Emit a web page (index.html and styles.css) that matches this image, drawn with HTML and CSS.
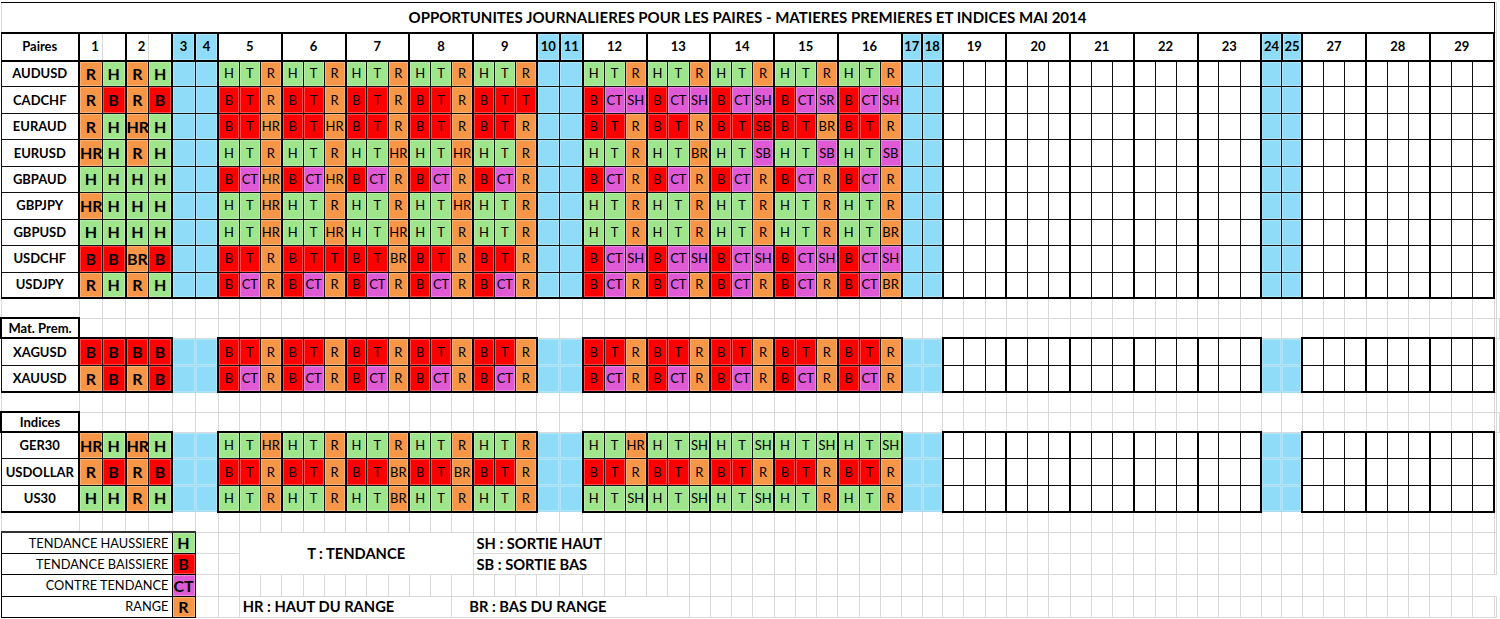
FILE: index.html
```html
<!DOCTYPE html>
<html lang="fr">
<head>
<meta charset="utf-8">
<title>Opportunités journalières mai 2014</title>
<link rel="stylesheet" href="styles.css">
</head>
<body>
<table class="sheet">
<colgroup>
<col class="c-lbl">
<col class="c-a"><col class="c-a"><col class="c-a"><col class="c-a">
<col class="c-w"><col class="c-w">
<col class="c-d"><col class="c-d"><col class="c-d"><col class="c-d"><col class="c-d"><col class="c-d"><col class="c-d"><col class="c-d"><col class="c-d"><col class="c-d"><col class="c-d"><col class="c-d"><col class="c-d"><col class="c-d"><col class="c-d">
<col class="c-w"><col class="c-w">
<col class="c-d"><col class="c-d"><col class="c-d"><col class="c-d"><col class="c-d"><col class="c-d"><col class="c-d"><col class="c-d"><col class="c-d"><col class="c-d"><col class="c-d"><col class="c-d"><col class="c-d"><col class="c-d"><col class="c-d">
<col class="c-e"><col class="c-e">
<col class="c-d"><col class="c-d"><col class="c-d"><col class="c-d"><col class="c-d"><col class="c-d"><col class="c-d"><col class="c-d"><col class="c-d"><col class="c-d"><col class="c-d"><col class="c-d"><col class="c-d"><col class="c-d"><col class="c-d">
<col class="c-e"><col class="c-e">
<col class="c-d"><col class="c-d"><col class="c-d"><col class="c-d"><col class="c-d"><col class="c-d"><col class="c-d"><col class="c-d"><col class="c-d">
<col class="c-x">
</colgroup>
<tbody>
<tr class="ti"><td colspan="67" class="tt">OPPORTUNITES JOURNALIERES POUR LES PAIRES - MATIERES PREMIERES ET INDICES MAI 2014</td><td class="x"></td></tr>

<tr class="d hd t u"><td class="l">Paires</td><td class="hn">1</td><td class="e"></td><td class="hn">2</td><td class="e"></td><td class="b e">3</td><td class="b e">4</td><td colspan="3" class="e">5</td><td colspan="3" class="e">6</td><td colspan="3" class="e">7</td><td colspan="3" class="e">8</td><td colspan="3" class="e">9</td><td class="b e">10</td><td class="b e">11</td><td colspan="3" class="e">12</td><td colspan="3" class="e">13</td><td colspan="3" class="e">14</td><td colspan="3" class="e">15</td><td colspan="3" class="e">16</td><td class="b e">17</td><td class="b e">18</td><td colspan="3" class="e">19</td><td colspan="3" class="e">20</td><td colspan="3" class="e">21</td><td colspan="3" class="e">22</td><td colspan="3" class="e">23</td><td class="b e">24</td><td class="b e">25</td><td colspan="3" class="e">27</td><td colspan="3" class="e">28</td><td colspan="3" class="e">29</td><td class="x"></td></tr>

<tr class="d p"><td class="l">AUDUSD</td><td class="o big">R</td><td class="g big e">H</td><td class="o big">R</td><td class="g big e">H</td><td class="b"></td><td class="b e"></td><td class="g">H</td><td class="g">T</td><td class="o e">R</td><td class="g">H</td><td class="g">T</td><td class="o e">R</td><td class="g">H</td><td class="g">T</td><td class="o e">R</td><td class="g">H</td><td class="g">T</td><td class="o e">R</td><td class="g">H</td><td class="g">T</td><td class="o e">R</td><td class="b"></td><td class="b e"></td><td class="g">H</td><td class="g">T</td><td class="o e">R</td><td class="g">H</td><td class="g">T</td><td class="o e">R</td><td class="g">H</td><td class="g">T</td><td class="o e">R</td><td class="g">H</td><td class="g">T</td><td class="o e">R</td><td class="g">H</td><td class="g">T</td><td class="o e">R</td><td class="b"></td><td class="b e"></td><td></td><td></td><td class="e"></td><td></td><td></td><td class="e"></td><td></td><td></td><td class="e"></td><td></td><td></td><td class="e"></td><td></td><td></td><td class="e"></td><td class="b"></td><td class="b e"></td><td></td><td></td><td class="e"></td><td></td><td></td><td class="e"></td><td></td><td></td><td class="e"></td><td class="x"></td></tr>

<tr class="d p"><td class="l">CADCHF</td><td class="o big">R</td><td class="r big e">B</td><td class="o big">R</td><td class="r big e">B</td><td class="b"></td><td class="b e"></td><td class="r">B</td><td class="r">T</td><td class="o e">R</td><td class="r">B</td><td class="r">T</td><td class="o e">R</td><td class="r">B</td><td class="r">T</td><td class="o e">R</td><td class="r">B</td><td class="r">T</td><td class="o e">R</td><td class="r">B</td><td class="r">T</td><td class="r e">T</td><td class="b"></td><td class="b e"></td><td class="r">B</td><td class="m">CT</td><td class="m e">SH</td><td class="r">B</td><td class="m">CT</td><td class="m e">SH</td><td class="r">B</td><td class="m">CT</td><td class="m e">SH</td><td class="r">B</td><td class="m">CT</td><td class="m e">SR</td><td class="r">B</td><td class="m">CT</td><td class="m e">SH</td><td class="b"></td><td class="b e"></td><td></td><td></td><td class="e"></td><td></td><td></td><td class="e"></td><td></td><td></td><td class="e"></td><td></td><td></td><td class="e"></td><td></td><td></td><td class="e"></td><td class="b"></td><td class="b e"></td><td></td><td></td><td class="e"></td><td></td><td></td><td class="e"></td><td></td><td></td><td class="e"></td><td class="x"></td></tr>

<tr class="d p"><td class="l">EURAUD</td><td class="o big">R</td><td class="g big e">H</td><td class="o big">HR</td><td class="g big e">H</td><td class="b"></td><td class="b e"></td><td class="r">B</td><td class="r">T</td><td class="o e">HR</td><td class="r">B</td><td class="r">T</td><td class="o e">HR</td><td class="r">B</td><td class="r">T</td><td class="o e">R</td><td class="r">B</td><td class="r">T</td><td class="o e">R</td><td class="r">B</td><td class="r">T</td><td class="o e">R</td><td class="b"></td><td class="b e"></td><td class="r">B</td><td class="r">T</td><td class="o e">R</td><td class="r">B</td><td class="r">T</td><td class="o e">R</td><td class="r">B</td><td class="r">T</td><td class="r e">SB</td><td class="r">B</td><td class="r">T</td><td class="o e">BR</td><td class="r">B</td><td class="r">T</td><td class="o e">R</td><td class="b"></td><td class="b e"></td><td></td><td></td><td class="e"></td><td></td><td></td><td class="e"></td><td></td><td></td><td class="e"></td><td></td><td></td><td class="e"></td><td></td><td></td><td class="e"></td><td class="b"></td><td class="b e"></td><td></td><td></td><td class="e"></td><td></td><td></td><td class="e"></td><td></td><td></td><td class="e"></td><td class="x"></td></tr>

<tr class="d p"><td class="l">EURUSD</td><td class="o big">HR</td><td class="g big e">H</td><td class="o big">R</td><td class="g big e">H</td><td class="b"></td><td class="b e"></td><td class="g">H</td><td class="g">T</td><td class="o e">R</td><td class="g">H</td><td class="g">T</td><td class="o e">R</td><td class="g">H</td><td class="g">T</td><td class="o e">HR</td><td class="g">H</td><td class="g">T</td><td class="o e">HR</td><td class="g">H</td><td class="g">T</td><td class="o e">R</td><td class="b"></td><td class="b e"></td><td class="g">H</td><td class="g">T</td><td class="o e">R</td><td class="g">H</td><td class="g">T</td><td class="o e">BR</td><td class="g">H</td><td class="g">T</td><td class="m e">SB</td><td class="g">H</td><td class="g">T</td><td class="m e">SB</td><td class="g">H</td><td class="g">T</td><td class="m e">SB</td><td class="b"></td><td class="b e"></td><td></td><td></td><td class="e"></td><td></td><td></td><td class="e"></td><td></td><td></td><td class="e"></td><td></td><td></td><td class="e"></td><td></td><td></td><td class="e"></td><td class="b"></td><td class="b e"></td><td></td><td></td><td class="e"></td><td></td><td></td><td class="e"></td><td></td><td></td><td class="e"></td><td class="x"></td></tr>

<tr class="d p"><td class="l">GBPAUD</td><td class="g big">H</td><td class="g big e">H</td><td class="g big">H</td><td class="g big e">H</td><td class="b"></td><td class="b e"></td><td class="r">B</td><td class="m">CT</td><td class="o e">HR</td><td class="r">B</td><td class="m">CT</td><td class="o e">HR</td><td class="r">B</td><td class="m">CT</td><td class="o e">R</td><td class="r">B</td><td class="m">CT</td><td class="o e">R</td><td class="r">B</td><td class="m">CT</td><td class="o e">R</td><td class="b"></td><td class="b e"></td><td class="r">B</td><td class="m">CT</td><td class="o e">R</td><td class="r">B</td><td class="m">CT</td><td class="o e">R</td><td class="r">B</td><td class="m">CT</td><td class="o e">R</td><td class="r">B</td><td class="m">CT</td><td class="o e">R</td><td class="r">B</td><td class="m">CT</td><td class="o e">R</td><td class="b"></td><td class="b e"></td><td></td><td></td><td class="e"></td><td></td><td></td><td class="e"></td><td></td><td></td><td class="e"></td><td></td><td></td><td class="e"></td><td></td><td></td><td class="e"></td><td class="b"></td><td class="b e"></td><td></td><td></td><td class="e"></td><td></td><td></td><td class="e"></td><td></td><td></td><td class="e"></td><td class="x"></td></tr>

<tr class="d p"><td class="l">GBPJPY</td><td class="o big">HR</td><td class="g big e">H</td><td class="g big">H</td><td class="g big e">H</td><td class="b"></td><td class="b e"></td><td class="g">H</td><td class="g">T</td><td class="o e">HR</td><td class="g">H</td><td class="g">T</td><td class="o e">R</td><td class="g">H</td><td class="g">T</td><td class="o e">R</td><td class="g">H</td><td class="g">T</td><td class="o e">HR</td><td class="g">H</td><td class="g">T</td><td class="o e">R</td><td class="b"></td><td class="b e"></td><td class="g">H</td><td class="g">T</td><td class="o e">R</td><td class="g">H</td><td class="g">T</td><td class="o e">R</td><td class="g">H</td><td class="g">T</td><td class="o e">R</td><td class="g">H</td><td class="g">T</td><td class="o e">R</td><td class="g">H</td><td class="g">T</td><td class="o e">R</td><td class="b"></td><td class="b e"></td><td></td><td></td><td class="e"></td><td></td><td></td><td class="e"></td><td></td><td></td><td class="e"></td><td></td><td></td><td class="e"></td><td></td><td></td><td class="e"></td><td class="b"></td><td class="b e"></td><td></td><td></td><td class="e"></td><td></td><td></td><td class="e"></td><td></td><td></td><td class="e"></td><td class="x"></td></tr>

<tr class="d p"><td class="l">GBPUSD</td><td class="g big">H</td><td class="g big e">H</td><td class="g big">H</td><td class="g big e">H</td><td class="b"></td><td class="b e"></td><td class="g">H</td><td class="g">T</td><td class="o e">HR</td><td class="g">H</td><td class="g">T</td><td class="o e">HR</td><td class="g">H</td><td class="g">T</td><td class="o e">HR</td><td class="g">H</td><td class="g">T</td><td class="o e">R</td><td class="g">H</td><td class="g">T</td><td class="o e">R</td><td class="b"></td><td class="b e"></td><td class="g">H</td><td class="g">T</td><td class="o e">R</td><td class="g">H</td><td class="g">T</td><td class="o e">R</td><td class="g">H</td><td class="g">T</td><td class="o e">R</td><td class="g">H</td><td class="g">T</td><td class="o e">R</td><td class="g">H</td><td class="g">T</td><td class="o e">BR</td><td class="b"></td><td class="b e"></td><td></td><td></td><td class="e"></td><td></td><td></td><td class="e"></td><td></td><td></td><td class="e"></td><td></td><td></td><td class="e"></td><td></td><td></td><td class="e"></td><td class="b"></td><td class="b e"></td><td></td><td></td><td class="e"></td><td></td><td></td><td class="e"></td><td></td><td></td><td class="e"></td><td class="x"></td></tr>

<tr class="d p"><td class="l">USDCHF</td><td class="r big">B</td><td class="r big e">B</td><td class="o big">BR</td><td class="r big e">B</td><td class="b"></td><td class="b e"></td><td class="r">B</td><td class="r">T</td><td class="o e">R</td><td class="r">B</td><td class="r">T</td><td class="r e">T</td><td class="r">B</td><td class="r">T</td><td class="o e">BR</td><td class="r">B</td><td class="r">T</td><td class="o e">R</td><td class="r">B</td><td class="r">T</td><td class="o e">R</td><td class="b"></td><td class="b e"></td><td class="r">B</td><td class="m">CT</td><td class="m e">SH</td><td class="r">B</td><td class="m">CT</td><td class="m e">SH</td><td class="r">B</td><td class="m">CT</td><td class="m e">SH</td><td class="r">B</td><td class="m">CT</td><td class="m e">SH</td><td class="r">B</td><td class="m">CT</td><td class="m e">SH</td><td class="b"></td><td class="b e"></td><td></td><td></td><td class="e"></td><td></td><td></td><td class="e"></td><td></td><td></td><td class="e"></td><td></td><td></td><td class="e"></td><td></td><td></td><td class="e"></td><td class="b"></td><td class="b e"></td><td></td><td></td><td class="e"></td><td></td><td></td><td class="e"></td><td></td><td></td><td class="e"></td><td class="x"></td></tr>

<tr class="d p u"><td class="l">USDJPY</td><td class="o big">R</td><td class="g big e">H</td><td class="o big">R</td><td class="g big e">H</td><td class="b"></td><td class="b e"></td><td class="r">B</td><td class="m">CT</td><td class="o e">R</td><td class="r">B</td><td class="m">CT</td><td class="o e">R</td><td class="r">B</td><td class="m">CT</td><td class="o e">R</td><td class="r">B</td><td class="m">CT</td><td class="o e">R</td><td class="r">B</td><td class="m">CT</td><td class="o e">R</td><td class="b"></td><td class="b e"></td><td class="r">B</td><td class="m">CT</td><td class="o e">R</td><td class="r">B</td><td class="m">CT</td><td class="o e">R</td><td class="r">B</td><td class="m">CT</td><td class="o e">R</td><td class="r">B</td><td class="m">CT</td><td class="o e">R</td><td class="r">B</td><td class="m">CT</td><td class="o e">BR</td><td class="b"></td><td class="b e"></td><td></td><td></td><td class="e"></td><td></td><td></td><td class="e"></td><td></td><td></td><td class="e"></td><td></td><td></td><td class="e"></td><td></td><td></td><td class="e"></td><td class="b"></td><td class="b e"></td><td></td><td></td><td class="e"></td><td></td><td></td><td class="e"></td><td></td><td></td><td class="e"></td><td class="x"></td></tr>

<tr class="s"><td></td><td></td><td></td><td></td><td></td><td></td><td></td><td></td><td></td><td></td><td></td><td></td><td></td><td></td><td></td><td></td><td></td><td></td><td></td><td></td><td></td><td></td><td></td><td></td><td></td><td></td><td></td><td></td><td></td><td></td><td></td><td></td><td></td><td></td><td></td><td></td><td></td><td></td><td></td><td></td><td></td><td></td><td></td><td></td><td></td><td></td><td></td><td></td><td></td><td></td><td></td><td></td><td></td><td></td><td></td><td></td><td></td><td></td><td></td><td></td><td></td><td></td><td></td><td></td><td></td><td></td><td></td><td></td></tr>

<tr class="s"><td class="lb">Mat. Prem.</td><td></td><td></td><td></td><td></td><td></td><td></td><td></td><td></td><td></td><td></td><td></td><td></td><td></td><td></td><td></td><td></td><td></td><td></td><td></td><td></td><td></td><td></td><td></td><td></td><td></td><td></td><td></td><td></td><td></td><td></td><td></td><td></td><td></td><td></td><td></td><td></td><td></td><td></td><td></td><td></td><td></td><td></td><td></td><td></td><td></td><td></td><td></td><td></td><td></td><td></td><td></td><td></td><td></td><td></td><td></td><td></td><td></td><td></td><td></td><td></td><td></td><td></td><td></td><td></td><td></td><td></td><td></td><td></td></tr>

<tr class="d q t"><td class="l">XAGUSD</td><td class="r big">B</td><td class="r big e">B</td><td class="r big">B</td><td class="r big e">B</td><td class="b n"></td><td class="b n e"></td><td class="r">B</td><td class="r">T</td><td class="o e">R</td><td class="r">B</td><td class="r">T</td><td class="o e">R</td><td class="r">B</td><td class="r">T</td><td class="o e">R</td><td class="r">B</td><td class="r">T</td><td class="o e">R</td><td class="r">B</td><td class="r">T</td><td class="o e">R</td><td class="b n"></td><td class="b n e"></td><td class="r">B</td><td class="r">T</td><td class="o e">R</td><td class="r">B</td><td class="r">T</td><td class="o e">R</td><td class="r">B</td><td class="r">T</td><td class="o e">R</td><td class="r">B</td><td class="r">T</td><td class="o e">R</td><td class="r">B</td><td class="r">T</td><td class="o e">R</td><td class="b n"></td><td class="b n e"></td><td></td><td></td><td class="e"></td><td></td><td></td><td class="e"></td><td></td><td></td><td class="e"></td><td></td><td></td><td class="e"></td><td></td><td></td><td class="e"></td><td class="b n"></td><td class="b n e"></td><td></td><td></td><td class="e"></td><td></td><td></td><td class="e"></td><td></td><td></td><td class="e"></td><td class="x"></td></tr>

<tr class="d q u"><td class="l">XAUUSD</td><td class="o big">R</td><td class="r big e">B</td><td class="o big">R</td><td class="r big e">B</td><td class="b n"></td><td class="b n e"></td><td class="r">B</td><td class="m">CT</td><td class="o e">R</td><td class="r">B</td><td class="m">CT</td><td class="o e">R</td><td class="r">B</td><td class="m">CT</td><td class="o e">R</td><td class="r">B</td><td class="m">CT</td><td class="o e">R</td><td class="r">B</td><td class="m">CT</td><td class="o e">R</td><td class="b n"></td><td class="b n e"></td><td class="r">B</td><td class="m">CT</td><td class="o e">R</td><td class="r">B</td><td class="m">CT</td><td class="o e">R</td><td class="r">B</td><td class="m">CT</td><td class="o e">R</td><td class="r">B</td><td class="m">CT</td><td class="o e">R</td><td class="r">B</td><td class="m">CT</td><td class="o e">R</td><td class="b n"></td><td class="b n e"></td><td></td><td></td><td class="e"></td><td></td><td></td><td class="e"></td><td></td><td></td><td class="e"></td><td></td><td></td><td class="e"></td><td></td><td></td><td class="e"></td><td class="b n"></td><td class="b n e"></td><td></td><td></td><td class="e"></td><td></td><td></td><td class="e"></td><td></td><td></td><td class="e"></td><td class="x"></td></tr>

<tr class="s"><td></td><td></td><td></td><td></td><td></td><td></td><td></td><td></td><td></td><td></td><td></td><td></td><td></td><td></td><td></td><td></td><td></td><td></td><td></td><td></td><td></td><td></td><td></td><td></td><td></td><td></td><td></td><td></td><td></td><td></td><td></td><td></td><td></td><td></td><td></td><td></td><td></td><td></td><td></td><td></td><td></td><td></td><td></td><td></td><td></td><td></td><td></td><td></td><td></td><td></td><td></td><td></td><td></td><td></td><td></td><td></td><td></td><td></td><td></td><td></td><td></td><td></td><td></td><td></td><td></td><td></td><td></td><td></td></tr>

<tr class="s"><td class="lb">Indices</td><td></td><td></td><td></td><td></td><td></td><td></td><td></td><td></td><td></td><td></td><td></td><td></td><td></td><td></td><td></td><td></td><td></td><td></td><td></td><td></td><td></td><td></td><td></td><td></td><td></td><td></td><td></td><td></td><td></td><td></td><td></td><td></td><td></td><td></td><td></td><td></td><td></td><td></td><td></td><td></td><td></td><td></td><td></td><td></td><td></td><td></td><td></td><td></td><td></td><td></td><td></td><td></td><td></td><td></td><td></td><td></td><td></td><td></td><td></td><td></td><td></td><td></td><td></td><td></td><td></td><td></td><td></td><td></td></tr>

<tr class="d v t"><td class="l">GER30</td><td class="o big">HR</td><td class="g big e">H</td><td class="o big">HR</td><td class="g big e">H</td><td class="b n"></td><td class="b n e"></td><td class="g">H</td><td class="g">T</td><td class="o e">HR</td><td class="g">H</td><td class="g">T</td><td class="o e">R</td><td class="g">H</td><td class="g">T</td><td class="o e">R</td><td class="g">H</td><td class="g">T</td><td class="o e">R</td><td class="g">H</td><td class="g">T</td><td class="o e">R</td><td class="b n"></td><td class="b n e"></td><td class="g">H</td><td class="g">T</td><td class="o e">HR</td><td class="g">H</td><td class="g">T</td><td class="g e">SH</td><td class="g">H</td><td class="g">T</td><td class="g e">SH</td><td class="g">H</td><td class="g">T</td><td class="g e">SH</td><td class="g">H</td><td class="g">T</td><td class="g e">SH</td><td class="b n"></td><td class="b n e"></td><td></td><td></td><td class="e"></td><td></td><td></td><td class="e"></td><td></td><td></td><td class="e"></td><td></td><td></td><td class="e"></td><td></td><td></td><td class="e"></td><td class="b n"></td><td class="b n e"></td><td></td><td></td><td class="e"></td><td></td><td></td><td class="e"></td><td></td><td></td><td class="e"></td><td class="x"></td></tr>

<tr class="d v"><td class="l">USDOLLAR</td><td class="o big">R</td><td class="r big e">B</td><td class="o big">R</td><td class="r big e">B</td><td class="b n"></td><td class="b n e"></td><td class="r">B</td><td class="r">T</td><td class="o e">R</td><td class="r">B</td><td class="r">T</td><td class="o e">R</td><td class="r">B</td><td class="r">T</td><td class="o e">BR</td><td class="r">B</td><td class="r">T</td><td class="o e">BR</td><td class="r">B</td><td class="r">T</td><td class="o e">R</td><td class="b n"></td><td class="b n e"></td><td class="r">B</td><td class="r">T</td><td class="o e">R</td><td class="r">B</td><td class="r">T</td><td class="o e">R</td><td class="r">B</td><td class="r">T</td><td class="o e">R</td><td class="r">B</td><td class="r">T</td><td class="o e">R</td><td class="r">B</td><td class="r">T</td><td class="o e">R</td><td class="b n"></td><td class="b n e"></td><td></td><td></td><td class="e"></td><td></td><td></td><td class="e"></td><td></td><td></td><td class="e"></td><td></td><td></td><td class="e"></td><td></td><td></td><td class="e"></td><td class="b n"></td><td class="b n e"></td><td></td><td></td><td class="e"></td><td></td><td></td><td class="e"></td><td></td><td></td><td class="e"></td><td class="x"></td></tr>

<tr class="d v u"><td class="l">US30</td><td class="g big">H</td><td class="g big e">H</td><td class="o big">R</td><td class="g big e">H</td><td class="b n"></td><td class="b n e"></td><td class="g">H</td><td class="g">T</td><td class="o e">R</td><td class="g">H</td><td class="g">T</td><td class="o e">R</td><td class="g">H</td><td class="g">T</td><td class="o e">BR</td><td class="g">H</td><td class="g">T</td><td class="o e">R</td><td class="g">H</td><td class="g">T</td><td class="o e">R</td><td class="b n"></td><td class="b n e"></td><td class="g">H</td><td class="g">T</td><td class="g e">SH</td><td class="g">H</td><td class="g">T</td><td class="g e">SH</td><td class="g">H</td><td class="g">T</td><td class="g e">SH</td><td class="g">H</td><td class="g">T</td><td class="o e">R</td><td class="g">H</td><td class="g">T</td><td class="o e">R</td><td class="b n"></td><td class="b n e"></td><td></td><td></td><td class="e"></td><td></td><td></td><td class="e"></td><td></td><td></td><td class="e"></td><td></td><td></td><td class="e"></td><td></td><td></td><td class="e"></td><td class="b n"></td><td class="b n e"></td><td></td><td></td><td class="e"></td><td></td><td></td><td class="e"></td><td></td><td></td><td class="e"></td><td class="x"></td></tr>

<tr class="s gap"><td></td><td></td><td></td><td></td><td></td><td></td><td></td><td></td><td></td><td></td><td></td><td></td><td></td><td></td><td></td><td></td><td></td><td></td><td></td><td></td><td></td><td></td><td></td><td></td><td></td><td></td><td></td><td></td><td></td><td></td><td></td><td></td><td></td><td></td><td></td><td></td><td></td><td></td><td></td><td></td><td></td><td></td><td></td><td></td><td></td><td></td><td></td><td></td><td></td><td></td><td></td><td></td><td></td><td></td><td></td><td></td><td></td><td></td><td></td><td></td><td></td><td></td><td></td><td></td><td></td><td></td><td></td><td></td></tr>

<tr class="lg lg1"><td colspan="5" class="ll">TENDANCE HAUSSIERE</td><td class="sw g">H</td><td></td><td></td><td colspan="11" rowspan="2" class="tx tc">T : TENDANCE</td><td colspan="6" class="tx">SH : SORTIE HAUT</td><td></td><td></td><td></td><td></td><td></td><td></td><td></td><td></td><td></td><td></td><td></td><td></td><td></td><td></td><td></td><td></td><td></td><td></td><td></td><td></td><td></td><td></td><td></td><td></td><td></td><td></td><td></td><td></td><td></td><td></td><td></td><td></td><td></td><td></td><td></td><td></td><td></td><td></td><td></td><td></td><td></td><td></td><td></td></tr>

<tr class="lg"><td colspan="5" class="ll">TENDANCE BAISSIERE</td><td class="sw r">B</td><td></td><td></td><td colspan="6" class="tx">SB : SORTIE BAS</td><td></td><td></td><td></td><td></td><td></td><td></td><td></td><td></td><td></td><td></td><td></td><td></td><td></td><td></td><td></td><td></td><td></td><td></td><td></td><td></td><td></td><td></td><td></td><td></td><td></td><td></td><td></td><td></td><td></td><td></td><td></td><td></td><td></td><td></td><td></td><td></td><td></td><td></td><td></td><td></td><td></td><td></td><td></td></tr>

<tr class="lg"><td colspan="5" class="ll">CONTRE TENDANCE</td><td class="sw m">CT</td><td></td><td></td><td></td><td></td><td></td><td></td><td></td><td></td><td></td><td></td><td></td><td></td><td></td><td></td><td></td><td></td><td></td><td></td><td></td><td></td><td></td><td></td><td></td><td></td><td></td><td></td><td></td><td></td><td></td><td></td><td></td><td></td><td></td><td></td><td></td><td></td><td></td><td></td><td></td><td></td><td></td><td></td><td></td><td></td><td></td><td></td><td></td><td></td><td></td><td></td><td></td><td></td><td></td><td></td><td></td><td></td><td></td><td></td><td></td><td></td></tr>

<tr class="lg"><td colspan="5" class="ll">RANGE</td><td class="sw o">R</td><td></td><td></td><td colspan="10" class="tx">HR : HAUT DU RANGE</td><td colspan="11" class="tx bp">BR : BAS DU RANGE</td><td></td><td></td><td></td><td></td><td></td><td></td><td></td><td></td><td></td><td></td><td></td><td></td><td></td><td></td><td></td><td></td><td></td><td></td><td></td><td></td><td></td><td></td><td></td><td></td><td></td><td></td><td></td><td></td><td></td><td></td><td></td><td></td><td></td><td></td><td></td><td></td><td></td><td></td><td></td></tr>
</tbody>
</table>
</body>
</html>
```

FILE: styles.css
```css
html, body {
  margin: 0;
  padding: 0;
  background: #fff;
}
body {
  width: 1500px;
  height: 619px;
  overflow: hidden;
  font-family: Lato, "Liberation Sans", sans-serif;
  color: #000;
}
.sheet {
  border-collapse: collapse;
  table-layout: fixed;
  width: 1500px;
  margin-top: 2px;
}
.c-lbl { width: 78px; }
.c-a { width: 23.25px; }
.c-w { width: 23px; }
.c-d { width: 21.25px; }
.c-e { width: 20.5px; }
.c-x { width: auto; }

td {
  border: 1px solid #d9d9d9;
  padding: 0;
  text-align: center;
  vertical-align: middle;
  white-space: nowrap;
  overflow: visible;
  font-size: 13px;
  line-height: 1;
}

/* row heights */
.ti { height: 30px; }
.hd { height: 28px; }
.p { height: 26.45px; }
.q { height: 27px; }
.v { height: 26.5px; }
.s { height: 20px; }
.gap { height: 20.5px; }
.lg { height: 21.25px; }

/* title */
.tt {
  border-top: 1px solid #000;
  border-right: 1px solid #000;
  font-weight: 700;
  font-size: 15px;
}

/* data blocks */
.d td { border: 1px solid #111; }
.d td.e { border-right: 2px solid #000; }
.d td.l {
  border-right: 2px solid #000;
  font-weight: 700;
  font-size: 13px;
}
.d td.x { border: 1px solid #d9d9d9; }
.d td.n { border-color: #a9dcee; }
.d td.n.e { border-right: 2px solid #000; }
.t td:not(.x):not(.n) { border-top: 2px solid #000; }
.u td:not(.x):not(.n) { border-bottom: 2px solid #000; }

.hd td { font-weight: 700; font-size: 13px; }
.hd td.hn {
  text-align: right;
  padding-right: 3px;
  border-right: 1px solid #d9d9d9;
}

.big { font-size: 16px; font-weight: 700; }

/* colours */
.g { background: #9fe58b; }
.r { background: #ff0000; }
.o { background: #f79646; }
.m { background: #e05ad6; }
.b { background: #8fdcf9; }
.g, .r, .o, .m, .b { box-shadow: inset 0 0 0 1px rgba(255, 255, 255, 0.28); }

/* section labels */
.s td.lb {
  border: 2px solid #000;
  font-weight: 700;
  font-size: 13px;
}

/* legend */
.ll {
  border: 1px solid #000;
  text-align: right;
  padding-right: 3px;
  font-size: 12.8px;
}
.sw {
  border: 1px solid #000;
  font-weight: 700;
  font-size: 16px;
}
.lg1 .ll, .lg1 .sw { border-top: 2px solid #333; }
.tx {
  font-weight: 700;
  font-size: 14.7px;
  text-align: left;
  padding-left: 3px;
  background: #fff;
}
.tc { text-align: center; padding-left: 0; }
.bp { padding-left: 17px; }
```
